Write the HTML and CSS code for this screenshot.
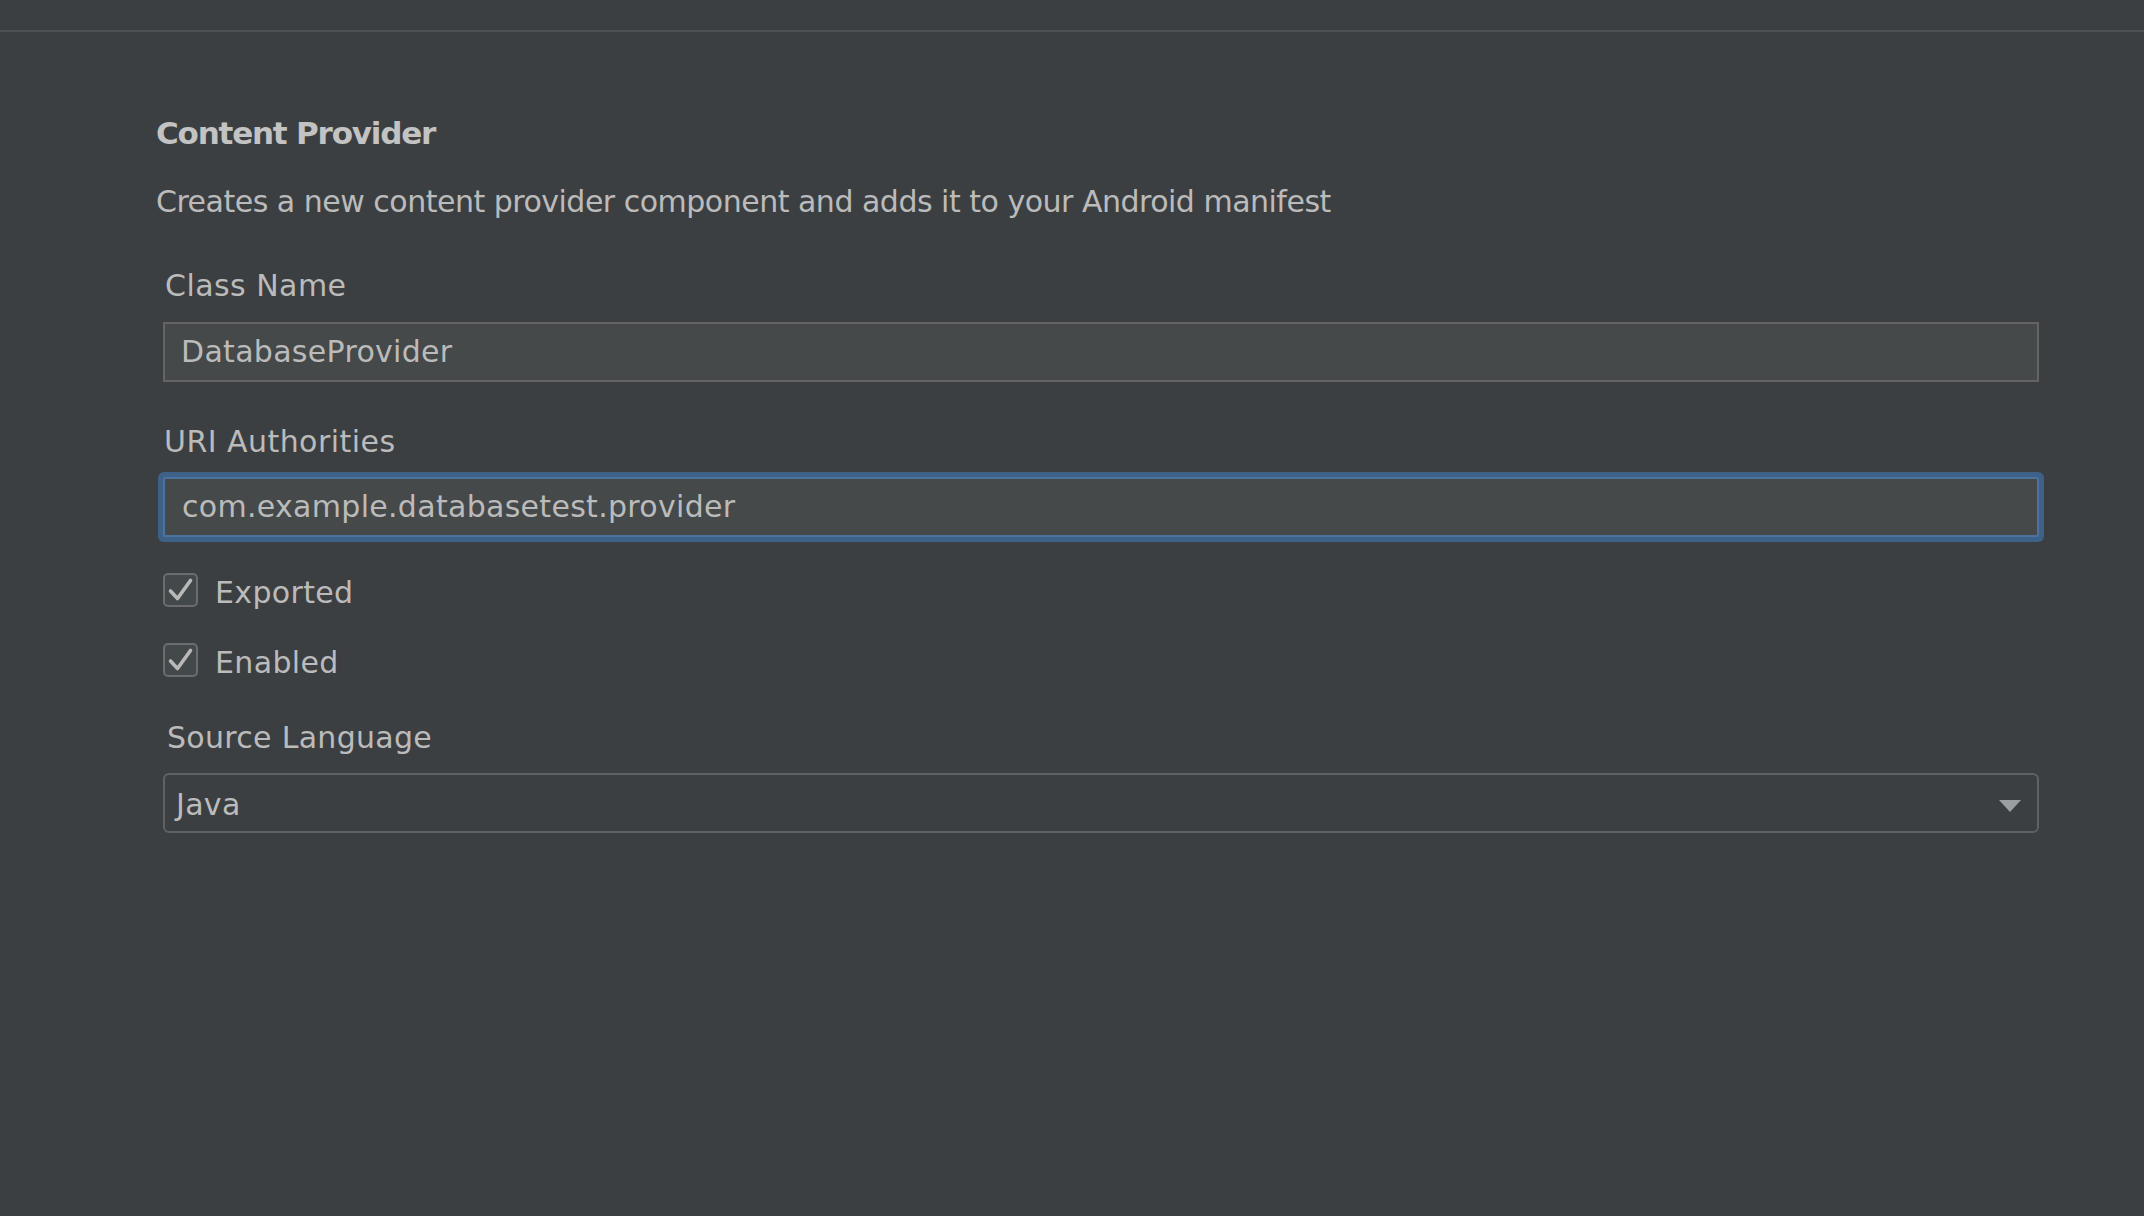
FILE: index.html
```html
<!DOCTYPE html>
<html>
<head>
<meta charset="utf-8">
<link rel="stylesheet" href="styles.css">
</head>
<body>
<div class="topbar"></div>
<main class="page">
  <h1 class="title">Content Provider</h1>
  <p class="desc">Creates a new content provider component and adds it to your Android manifest</p>
  <div class="form">
    <label class="label lbl-class">Class Name</label>
    <div class="field">DatabaseProvider</div>
    <label class="label lbl-uri">URI Authorities</label>
    <div class="field focused">com.example.databasetest.provider</div>
    <div class="check-row row1">
      <span class="checkbox"><svg viewBox="0 0 35 34" width="35" height="34"><path d="M7.5 18 L14.5 25.5 L27.5 7.5" fill="none" stroke="#b9b9b9" stroke-width="3.6" stroke-linecap="round" stroke-linejoin="round"/></svg></span>
      <span class="check-text">Exported</span>
    </div>
    <div class="check-row row2">
      <span class="checkbox"><svg viewBox="0 0 35 34" width="35" height="34"><path d="M7.5 18 L14.5 25.5 L27.5 7.5" fill="none" stroke="#b9b9b9" stroke-width="3.6" stroke-linecap="round" stroke-linejoin="round"/></svg></span>
      <span class="check-text">Enabled</span>
    </div>
    <label class="label lbl-src">Source Language</label>
    <div class="select">
      <span class="select-value">Java</span>
      <svg class="arrow" viewBox="0 0 22 12" width="22" height="12"><path d="M0 0 H22 L11 12 Z" fill="#9b9ea2"/></svg>
    </div>
  </div>
</main>
</body>
</html>
```
FILE: styles.css
```css
html, body {
  margin: 0;
  padding: 0;
}
body {
  background: #3c3f41;
  width: 2144px;
  height: 1216px;
  overflow: hidden;
  font-family: "DejaVu Sans", "Liberation Sans", sans-serif;
  font-size: 30px;
  line-height: 36px;
  color: #bbbbbb;
}
.topbar {
  height: 30px;
  border-bottom: 2px solid #4e5153;
}
.page {
  padding-left: 156px;
  padding-right: 105px;
}
.title {
  margin: 83px 0 0 0;
  font-size: 31px;
  letter-spacing: -1.2px;
  line-height: 36px;
  font-weight: bold;
  color: #c3c3c3;
}
.desc {
  margin: 33px 0 0 0;
  letter-spacing: -0.5px;
}
.form {
  margin-left: 7px;
  display: flex;
  flex-direction: column;
}
.label {
  display: block;
  margin-left: 2px;
  letter-spacing: 0.45px;
}
.lbl-class { margin-top: 48px; }
.lbl-uri { margin-top: 42px; margin-left: 1px; }
.lbl-src { margin-top: 42px; margin-left: 4px; letter-spacing: 0.3px; }
.field {
  box-sizing: border-box;
  height: 60px;
  margin-top: 18px;
  background: #45494a;
  border: 2px solid #646464;
  padding-left: 16px;
  display: flex;
  align-items: center;
  letter-spacing: 0.3px;
}
.field.focused {
  margin-top: 17px;
  padding-left: 17px;
  border-color: #4b73a0;
  border-radius: 2px;
  box-shadow: 0 0 0 5px #3e6287;
}
.check-row {
  display: flex;
  align-items: center;
  height: 36px;
}
.row1 { margin-top: 35px; }
.row2 { margin-top: 34px; }
.checkbox {
  box-sizing: border-box;
  width: 35px;
  height: 34px;
  border: 2px solid #6a6c6e;
  border-radius: 5px;
  background: #43494a;
  position: relative;
  flex: none;
}
.checkbox svg {
  position: absolute;
  left: -2px;
  top: -2px;
}
.check-text {
  margin-left: 17px;
  padding-top: 5px;
  letter-spacing: 0.35px;
}
.select {
  box-sizing: border-box;
  height: 60px;
  margin-top: 17px;
  border: 2px solid #5f6163;
  border-radius: 6px;
  display: flex;
  align-items: center;
  justify-content: space-between;
  padding-left: 11px;
  padding-right: 16px;
}
.select-value {
  padding-top: 3px;
  letter-spacing: 0.3px;
}
.arrow {
  margin-top: 6px;
}
```
